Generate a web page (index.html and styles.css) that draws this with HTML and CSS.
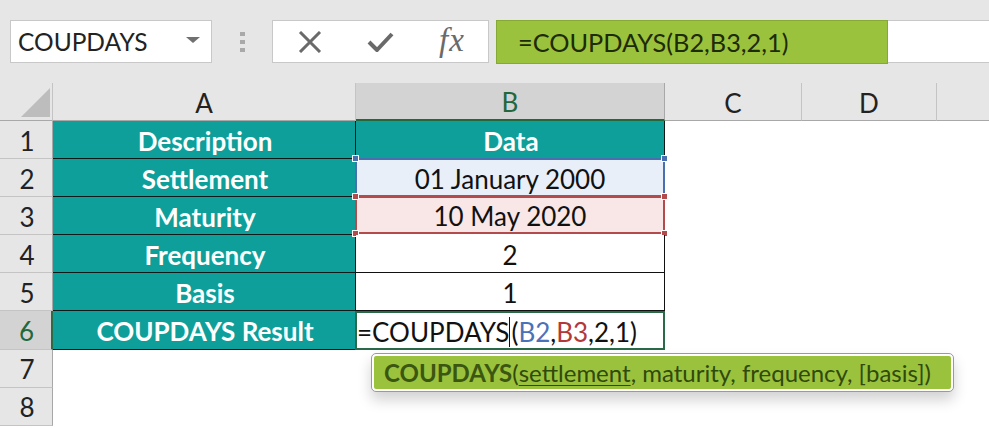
FILE: index.html
```html
<!DOCTYPE html>
<html>
<head>
<meta charset="utf-8">
<link rel="stylesheet" href="styles.css">
</head>
<body>
<div class="toolbar">
  <div class="namebox"><span>COUPDAYS</span><span class="caret"></span></div>
  <div class="dots"><i></i><i></i><i></i></div>
  <div class="fxbox">
    <svg class="ic" width="24" height="22" viewBox="0 0 24 22"><path d="M2 1 L22 21 M22 1 L2 21" stroke="#6a6a6a" stroke-width="3" fill="none"/></svg>
    <svg class="ic" width="27" height="22" viewBox="0 0 27 22"><path d="M2 11 L10 19 L25 3" stroke="#6a6a6a" stroke-width="4" fill="none" stroke-linejoin="round"/></svg>
    <span class="fx">fx</span>
  </div>
  <div class="formula"><span class="fhl">=COUPDAYS(B2,B3,2,1)</span></div>
</div>
<div class="sheet">
  <div class="corner"><span class="tri"></span></div>
  <div class="ch">A</div>
  <div class="ch sel">B</div>
  <div class="ch">C</div>
  <div class="ch">D</div>
  <div class="ch last"></div>

  <div class="rh">1</div>
  <div class="ta">Description</div>
  <div class="ta tb">Data</div>
  <div class="e"></div><div class="e"></div><div class="e"></div>

  <div class="rh">2</div>
  <div class="ta">Settlement</div>
  <div class="vb blue">01 January 2000<i class="h b tl"></i><i class="h b tr"></i></div>
  <div class="e"></div><div class="e"></div><div class="e"></div>

  <div class="rh">3</div>
  <div class="ta">Maturity</div>
  <div class="vb red">10 May 2020<i class="h r tl"></i><i class="h r tr"></i><i class="h r bl"></i><i class="h r br"></i></div>
  <div class="e"></div><div class="e"></div><div class="e"></div>

  <div class="rh">4</div>
  <div class="ta">Frequency</div>
  <div class="vb">2</div>
  <div class="e"></div><div class="e"></div><div class="e"></div>

  <div class="rh">5</div>
  <div class="ta">Basis</div>
  <div class="vb">1</div>
  <div class="e"></div><div class="e"></div><div class="e"></div>

  <div class="rh rsel">6</div>
  <div class="ta">COUPDAYS Result</div>
  <div class="vb active">=COUPDAYS<span class="cur"></span>(<span class="rb">B2</span>,<span class="rr">B3</span>,2,1)</div>
  <div class="e"></div><div class="e"></div><div class="e"></div>

  <div class="rh">7</div>
  <div class="e"></div><div class="e"></div><div class="e"></div><div class="e"></div><div class="e"></div>

  <div class="rh">8</div>
  <div class="e"></div><div class="e"></div><div class="e"></div><div class="e"></div><div class="e"></div>
</div>
<div class="tip"><div class="tipin"><b>COUPDAYS</b>(<u>settlement</u>, maturity, frequency, [basis])</div></div>
</body>
</html>
```
FILE: styles.css
```css
html, body {
  margin: 0;
  padding: 0;
  background: #ffffff;
  overflow: hidden;
  width: 989px;
  height: 428px;
  font-family: Lato, "Open Sans", sans-serif;
  color: #111;
}
.toolbar {
  height: 83px;
  box-sizing: border-box;
  padding-top: 20px;
  background: #e6e6e6;
  display: flex;
  align-items: flex-start;
}
.namebox {
  margin-left: 10px;
  width: 202px;
  height: 43px;
  box-sizing: border-box;
  border: 1px solid #c8c8c8;
  background: #fff;
  display: flex;
  align-items: center;
  justify-content: space-between;
  padding: 0 11px 0 7px;
  font-size: 24.5px;
  color: #222;
}
.caret {
  width: 0; height: 0;
  border-left: 7px solid transparent;
  border-right: 7px solid transparent;
  border-top: 6px solid #707070;
  margin-top: -3px;
}
.dots {
  margin-left: 28px;
  margin-top: 12px;
  display: flex;
  flex-direction: column;
  gap: 4px;
}
.dots i {
  display: block;
  width: 5px; height: 4px;
  background: #a9a9a9;
}
.fxbox {
  margin-left: 27px;
  width: 217px;
  height: 43px;
  box-sizing: border-box;
  border: 1px solid #c8c8c8;
  background: #fff;
  display: flex;
  align-items: center;
  padding-left: 25px;
  gap: 45px;
}
.fx {
  font-family: "Liberation Serif", "DejaVu Serif", serif;
  font-style: italic;
  font-size: 33px;
  color: #6a6a6a;
  margin-left: 0;
  margin-top: -3px;
  letter-spacing: 1px;
}
.formula {
  margin-left: 7px;
  flex: 1;
  height: 43px;
  box-sizing: border-box;
  border-top: 1px solid #c8c8c8;
  border-bottom: 1px solid #c8c8c8;
  background: #fff;
  display: flex;
}
.fhl {
  width: 392px;
  height: 44px;
  margin-top: -1px;
  box-sizing: border-box;
  background: #9bc23d;
  border: 1px solid #86a936;
  padding-left: 21px;
  display: flex;
  align-items: center;
  font-size: 25.3px;
  color: #1d2b06;
}
.sheet {
  display: grid;
  grid-template-columns: 53px 303px 309px 137px 135px 1fr;
  grid-template-rows: 38px repeat(8, 38.1px);
  font-size: 26px;
}
.corner {
  background: #e6e6e6;
  border-right: 1px solid #c4c4c4;
  border-bottom: 1px solid #a8a8a8;
  position: relative;
}
.tri {
  position: absolute;
  left: 21px; top: 5px;
  width: 0; height: 0;
  border-left: 29px solid transparent;
  border-bottom: 29px solid #bdbdbd;
}
.ch {
  background: #e6e6e6;
  border-right: 1px solid #c4c4c4;
  border-bottom: 1px solid #a8a8a8;
  display: flex;
  align-items: center;
  justify-content: center;
  color: #222;
  padding-top: 2px;
  box-sizing: border-box;
}
.ch.sel {
  background: #d3d3d3;
  color: #21693d;
  border-bottom: 2px solid #21693d;
  border-right-color: #a8a8a8;
}
.ch.last { border-right: none; }
.rh {
  background: #e6e6e6;
  border-right: 1px solid #a8a8a8;
  border-bottom: 1px solid #c4c4c4;
  display: flex;
  align-items: center;
  justify-content: center;
  color: #222;
  box-sizing: border-box;
  padding-left: 2px;
  padding-top: 2px;
}
.rh.rsel {
  background: #d3d3d3;
  color: #21693d;
  border-right: 2px solid #2c6a48;
}
.ta {
  background: #0e9f9a;
  color: #fff;
  font-weight: 700;
  display: flex;
  align-items: center;
  justify-content: center;
  border-bottom: 1px solid #0b1a19;
  border-right: 1px solid #0b1a19;
  box-sizing: border-box;
  padding-left: 2px;
  padding-top: 2px;
}
.ta.tb { border-bottom: none; }
.vb {
  position: relative;
  background: #fff;
  display: flex;
  align-items: center;
  justify-content: center;
  border-bottom: 1px solid #111;
  border-right: 1px solid #111;
  box-sizing: border-box;
  color: #111;
  padding-top: 2px;
}
.vb.blue {
  background: #e9eff9;
  border: 2px solid #4a6fb0;
  margin-top: -1px;
  margin-left: -1px;
}
.vb.red {
  background: #f8e7e6;
  border: 2px solid #b34a4c;
  margin-top: -1px;
  margin-left: -1px;
  margin-bottom: 1px;
}
.vb.active {
  justify-content: flex-start;
  border: 2px solid #2a6a48;
  margin-left: -1px;
  padding-left: 0;
  padding-bottom: 0;
}
.cur {
  display: inline-block;
  width: 1px;
  height: 30px;
  background: #111;
  margin: 0 1px 0 0;
}
.rb { color: #4a72b8; }
.rr { color: #b2383c; }
.h {
  position: absolute;
  width: 5px; height: 5px;
  border: 1px solid #fff;
}
.h.b { background: #4a6fb0; }
.h.r { background: #b34a4c; }
.tl { left: -5px; top: -5px; }
.tr { right: -5px; top: -5px; }
.bl { left: -5px; bottom: -5px; }
.br { right: -5px; bottom: -5px; }
.e { background: #fff; }
.tip {
  position: absolute;
  left: 371px;
  top: 353px;
  width: 583px;
  height: 39px;
  box-sizing: border-box;
  border: 1px solid #9a9a9a;
  border-radius: 5px;
  background: #fff;
  padding: 2px;
  box-shadow: 0 8px 14px rgba(0,0,0,0.18);
}
.tipin {
  height: 100%;
  background: #9bc23d;
  border-radius: 2px;
  display: flex;
  align-items: center;
  padding-left: 10px;
  font-size: 24px;
  color: #2f4a0c;
  white-space: nowrap;
  overflow: hidden;
}
.tipin b { color: #3a5610; }
.tipin u { text-decoration-thickness: 1px; text-underline-offset: 3px; }
```
